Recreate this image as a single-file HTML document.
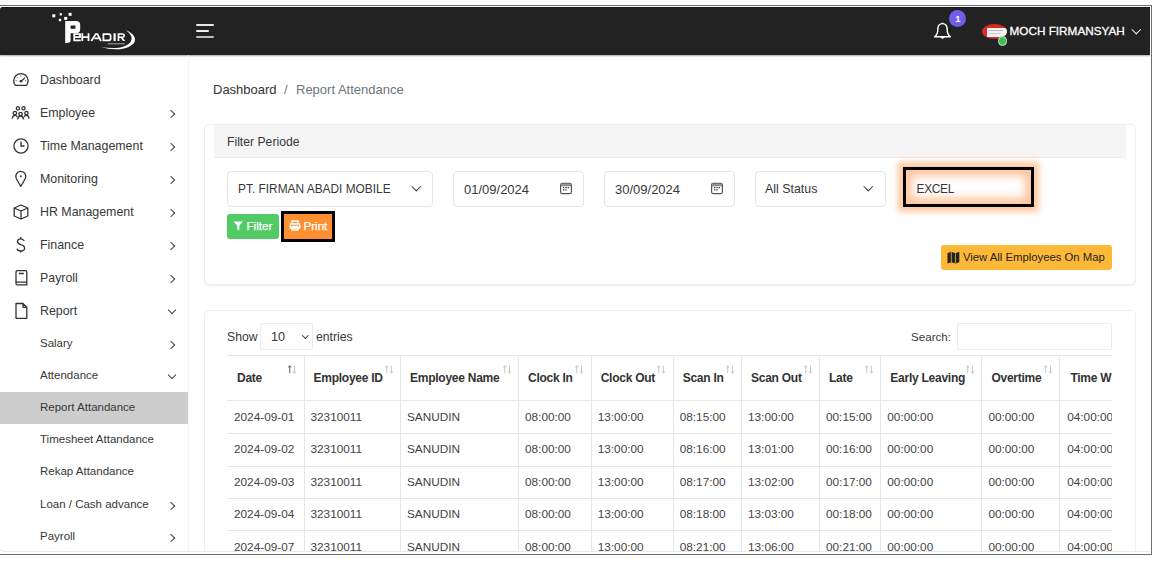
<!DOCTYPE html>
<html><head><meta charset="utf-8">
<style>
*{box-sizing:border-box;margin:0;padding:0}
html,body{width:1170px;height:565px;overflow:hidden;background:#fff;font-family:"Liberation Sans",sans-serif;color:#333}
.a{position:absolute}
.t{position:absolute;white-space:nowrap;line-height:1}
#frame{left:-1px;top:5px;width:1153px;height:550px;border:1px solid #6f6f6f}
#hdr{left:0;top:7px;width:1150px;height:48px;background:#222;border-top:1px solid #151515;border-top-left-radius:3px;box-shadow:0 1px 2px rgba(0,0,0,.35)}
#side{left:0;top:55px;width:189px;height:497px;border-right:1px solid #f4f4f4}
#bottomline{left:-2px;top:530px;width:1160px;height:22px;border-left:1.6px solid #e9e9e9;border-bottom:1.6px solid #e9e9e9;border-bottom-left-radius:7px}
.mi{font-size:12.4px;color:#383838}
.si{font-size:11.5px;color:#383838}
.chev{position:absolute;width:6px;height:6px;border-right:1.5px solid #444;border-top:1.5px solid #444;transform:rotate(45deg);margin-top:0.7px}
.chevd{position:absolute;width:6px;height:6px;border-right:1.4px solid #444;border-bottom:1.4px solid #444;transform:rotate(45deg)}
.card{border:1px solid #efefef;border-radius:5px;background:#fff;box-shadow:0 1px 1px rgba(0,0,0,.07)}
.inp{border:1px solid #e5e5e5;border-radius:4px;background:#fff}
.it{font-size:12.5px;color:#383838}
.vl{top:355px;width:1px;height:200px;background:#e6e6e6}
.hl{left:227px;width:885px;height:1px;background:#e6e6e6}
.th{font-size:12px;font-weight:bold;color:#333;top:371.9px;letter-spacing:-0.25px}
.td{font-size:11.8px;color:#444}
.sort{top:363px;font-size:11px;line-height:1;color:#c8c8c8;width:12px;height:12px}
.sort .up{position:absolute;left:0;top:0}
.sort .dn{position:absolute;left:5.5px;top:0}
.sort.act .up{color:#555}
svg.ic{position:absolute;fill:none;stroke:#333;stroke-width:1.3}
</style></head><body>
<div class="a" id="clip" style="left:0;top:0;width:1150px;height:552px;overflow:hidden">
<div id="hdr" class="a"></div>
<div id="side" class="a"></div>

<!-- logo -->
<svg class="a" style="left:0;top:0" width="200" height="56" viewBox="0 0 200 56">
 <g fill="#fff">
  <rect x="52.3" y="14.3" width="3" height="3"/>
  <rect x="59.7" y="13.2" width="2.2" height="2.2"/>
  <rect x="68.6" y="12.8" width="3" height="3"/>
  <rect x="58.8" y="18.8" width="2.4" height="2.4"/>
  <rect x="64.2" y="16.9" width="3" height="3"/>
  <path fill-rule="evenodd" d="M65.2 21 H76 Q80.2 21 80.2 25 V29.3 Q80.2 33.3 76 33.3 H70.6 V40.8 Q70.6 42 69.2 42.6 L65.2 43.2 Z M70.6 25.6 H75.4 V28.8 H70.6 Z"/>
  <path d="M117.6 33.3 H122.5 Q125 33.3 125 35.6 Q125 37.9 122.5 37.9 H123 L125.2 41.1 H123 L120.8 37.9 H119.3 V41.1 H117.6 Z M119.3 34.8 V36.5 H122.6 Q123.3 36.5 123.3 35.6 Q123.3 34.8 122.6 34.8 Z" fill-rule="evenodd"/>
 </g>
 <g fill="none" stroke="#fff" stroke-width="1.8">
  <path d="M80.8 34.1 H74.2 V40.3 H80.8 M74.2 37.2 H80 V34.1"/>
  <path d="M82.3 33.3 V41.1 M88.5 33.3 V41.1 M82.3 37.2 H88.5"/>
  <path d="M91.3 41.1 L95.8 34.1 H97.5 L100.9 41.1 M94.5 38.3 H98.5"/>
  <path d="M103.4 34.1 H108.8 Q110.6 34.1 110.6 36 V38.4 Q110.6 40.3 108.8 40.3 H103.4 Z"/>
  <path d="M114.6 33.3 V41.1" stroke-width="2.2"/>
 </g>
 <path d="M100.5 46.8 Q113 50.8 124 48.4 Q136 45.5 135 38.5 Q134 33.5 125.4 30 Q131.8 34 131.6 39 Q131 45 120.5 47.4 Q111 49 100.5 46.8 Z" fill="#fff"/>
 <rect x="107.8" y="43.1" width="17" height="1.3" fill="#8a8a8a"/>
</svg>
<!-- hamburger -->
<div class="a" style="left:196.2px;top:24.3px;width:17.8px;height:1.9px;border-radius:1px;background:#e8e8e8"></div>
<div class="a" style="left:196.2px;top:30.3px;width:12.8px;height:1.9px;border-radius:1px;background:#f0f0f0"></div>
<div class="a" style="left:196.2px;top:36.1px;width:17.8px;height:1.9px;border-radius:1px;background:#bdbdbd"></div>

<!-- header right -->
<svg class="a" style="left:930px;top:19.8px" width="26" height="26" viewBox="0 0 26 26">
 <path d="M12.5 3.6 C9.3 3.6 7.8 6 7.8 9.5 C7.8 12.8 7 15 4.6 16.8 H20.4 C18 15 17.2 12.8 17.2 9.5 C17.2 6 15.7 3.6 12.5 3.6 Z" fill="none" stroke="#fff" stroke-width="1.45" stroke-linejoin="round"/>
 <path d="M10.6 17.1 Q12.5 19.9 14.4 17.1 Z" fill="#fff" stroke="#fff" stroke-width="1"/>
 <circle cx="12.5" cy="3.3" r="0.9" fill="#fff"/>
</svg>
<div class="a" style="left:949.4px;top:10.2px;width:17px;height:17px;border-radius:50%;background:#6e5ee8"></div>
<div class="t" style="left:955.2px;top:13.8px;font-size:9.5px;font-weight:bold;color:#fff">1</div>
<div class="a" style="left:981.5px;top:23.5px;width:25px;height:15px;border-radius:50%;background:#d92b23;overflow:hidden">
  <div class="a" style="left:5px;top:4px;width:20px;height:9px;background:#f4f4f4"></div>
  <div class="a" style="left:7px;top:6px;width:14px;height:1px;background:#bbb"></div>
  <div class="a" style="left:7px;top:9px;width:12px;height:1px;background:#ccc"></div>
</div>
<div class="a" style="left:997.6px;top:36.2px;width:9.4px;height:9.4px;border-radius:50%;background:#3fbf4f;border:1.2px solid #d8d8d8"></div>
<div class="t" style="left:1009.5px;top:25.2px;font-size:11.75px;color:#fff;-webkit-text-stroke:0.3px #fff">MOCH FIRMANSYAH</div>
<div class="a" style="left:1132.8px;top:25.6px;width:6.5px;height:6.5px;border-right:1.3px solid #fff;border-bottom:1.3px solid #fff;transform:rotate(45deg)"></div>

<!-- sidebar -->
<svg class="ic" style="left:12px;top:71px" width="18" height="18" viewBox="0 0 18 18">
 <path d="M3.3 14.3 A7.2 7.2 0 1 1 14.5 14.3 Z" stroke-linejoin="round"/>
 <path d="M8.9 10.2 L12.6 7.3" stroke-width="1.4"/><circle cx="8.9" cy="10.2" r="1.3" fill="#333" stroke="none"/>
 <path d="M8.9 4.6 V5.7 M5 6.3 L5.7 7 M3.6 9.8 H4.7 M13.1 9.8 H14.2 M12.8 6.3 L12.1 7" stroke-width="0.9"/>
</svg>
<svg class="ic" style="left:11px;top:104px" width="20" height="18" viewBox="0 0 20 18">
 <circle cx="6.9" cy="4.3" r="1.6"/><circle cx="12.5" cy="4.3" r="1.6"/>
 <circle cx="3.9" cy="9.1" r="1.7"/><circle cx="9.6" cy="10" r="1.7"/><circle cx="15.4" cy="9.1" r="1.7"/>
 <path d="M1.2 14.6 Q1.6 11.3 3.9 11.3 Q5.6 11.3 6.3 13 M6.6 15.4 Q7 12.2 9.6 12.2 Q12.2 12.2 12.6 15.4 M13 13 Q13.7 11.3 15.4 11.3 Q17.7 11.3 18.1 14.6"/>
</svg>
<svg class="ic" style="left:12px;top:137px" width="18" height="18" viewBox="0 0 18 18">
 <circle cx="9" cy="9" r="7.1"/><path d="M9 4.5 V9 H12.5"/>
</svg>
<svg class="ic" style="left:12px;top:170px" width="18" height="18" viewBox="0 0 18 18">
 <path d="M8.8 16.5 L4.3 8.5 A5 5 0 1 1 13.3 8.5 Z" stroke-linejoin="round"/><circle cx="8.8" cy="6.3" r="1" fill="#333" stroke="none"/>
</svg>
<svg class="ic" style="left:12px;top:203px" width="18" height="18" viewBox="0 0 18 18">
 <path d="M9 2 L15.8 5 V13 L9 16 L2.2 13 V5 Z M2.2 5 L9 8 L15.8 5 M9 8 V16" stroke-linejoin="round"/>
</svg>
<svg class="ic" style="left:12px;top:236px" width="18" height="18" viewBox="0 0 18 18">
 <path d="M12.3 5 Q11 2.8 8.8 2.8 Q5.5 2.8 5.5 5.5 Q5.5 7.7 8.8 8.7 Q12.6 9.7 12.6 12.3 Q12.6 15 8.8 15 Q5.8 15 4.9 12.8 M8.8 1 V2.8 M8.8 15 V16.5"/>
</svg>
<svg class="ic" style="left:12px;top:269px" width="18" height="18" viewBox="0 0 18 18">
 <path d="M4 3 Q4 1.6 5.3 1.6 H13.6 Q14.8 1.6 14.8 3 V15.8 H5.3 Q4 15.8 4 14.5 Z M4 13.2 H14.8 M7 4.5 H11.8"/>
</svg>
<svg class="ic" style="left:12px;top:302px" width="18" height="18" viewBox="0 0 18 18">
 <path d="M4 1.5 H11 L14.8 5.3 V16.3 H4 Z M11 1.5 V5.3 H14.8" stroke-linejoin="round"/>
</svg>

<div class="t mi" style="left:40px;top:74px">Dashboard</div>
<div class="t mi" style="left:40px;top:107px">Employee</div>
<div class="t mi" style="left:40px;top:140px">Time Management</div>
<div class="t mi" style="left:40px;top:173px">Monitoring</div>
<div class="t mi" style="left:40px;top:206px">HR Management</div>
<div class="t mi" style="left:40px;top:239px">Finance</div>
<div class="t mi" style="left:40px;top:272px">Payroll</div>
<div class="t mi" style="left:40px;top:305px">Report</div>
<div class="t si" style="left:40px;top:338px">Salary</div>
<div class="t si" style="left:40px;top:370px">Attendance</div>
<div class="a" style="left:0;top:392px;width:188px;height:32px;background:#cdcdcd"></div>
<div class="t si" style="left:40px;top:402px">Report Attandance</div>
<div class="t si" style="left:40px;top:434px">Timesheet Attandance</div>
<div class="t si" style="left:40px;top:466px">Rekap Attandance</div>
<div class="t si" style="left:40px;top:499px">Loan / Cash advance</div>
<div class="t si" style="left:40px;top:531px">Payroll</div>
<div class="chev" style="left:168px;top:110px"></div>
<div class="chev" style="left:168px;top:143px"></div>
<div class="chev" style="left:168px;top:176px"></div>
<div class="chev" style="left:168px;top:209px"></div>
<div class="chev" style="left:168px;top:242px"></div>
<div class="chev" style="left:168px;top:275px"></div>
<div class="chevd" style="left:169px;top:306.8px"></div>
<div class="chev" style="left:168px;top:341px"></div>
<div class="chevd" style="left:169px;top:372.3px"></div>
<div class="chev" style="left:168px;top:502px"></div>
<div class="chev" style="left:168px;top:534px"></div>

<!-- breadcrumb -->
<div class="t" style="left:213px;top:83px;font-size:13px;color:#333">Dashboard</div>
<div class="t" style="left:284px;top:83px;font-size:13px;color:#777">/</div>
<div class="t" style="left:296px;top:83px;font-size:13px;color:#6c757d">Report Attendance</div>

<!-- card 1 -->
<div class="a card" style="left:204px;top:124px;width:932px;height:161px"></div>
<div class="a" style="left:214px;top:125px;width:912px;height:33px;background:#f5f5f5;border-bottom:1px solid #ececec"></div>
<div class="t it" style="left:227px;top:136px;font-size:12.2px">Filter Periode</div>

<div class="a inp" style="left:227px;top:171px;width:206px;height:36px"></div>
<div class="t it" style="left:238px;top:184.1px;font-size:11.9px">PT. FIRMAN ABADI MOBILE</div>
<div class="chevd" style="left:413px;top:183px;border-color:#333;width:6.5px;height:6.5px"></div>

<div class="a inp" style="left:453px;top:171px;width:131px;height:36px"></div>
<div class="t it" style="left:464px;top:182.5px;font-size:13px">01/09/2024</div>
<div class="a inp" style="left:604px;top:171px;width:131px;height:36px"></div>
<div class="t it" style="left:615px;top:182.5px;font-size:13px">30/09/2024</div>
<svg class="a" style="left:559px;top:181px" width="14" height="14" viewBox="0 0 14 14"><rect x="1.6" y="2.3" width="10.8" height="10.4" rx="1.8" fill="none" stroke="#555" stroke-width="1.2"/><rect x="2" y="4.3" width="10" height="0.9" fill="#555"/><rect x="2" y="2.6" width="10" height="1.7" fill="#999"/><g fill="#444"><rect x="4" y="6" width="1.4" height="1.3"/><rect x="6.3" y="6" width="1.4" height="1.3"/><rect x="8.6" y="6" width="1.4" height="1.3"/><rect x="4" y="8.3" width="1.4" height="1.3"/><rect x="6.3" y="8.3" width="1.4" height="1.3"/></g></svg>
<svg class="a" style="left:710px;top:181px" width="14" height="14" viewBox="0 0 14 14"><rect x="1.6" y="2.3" width="10.8" height="10.4" rx="1.8" fill="none" stroke="#555" stroke-width="1.2"/><rect x="2" y="4.3" width="10" height="0.9" fill="#555"/><rect x="2" y="2.6" width="10" height="1.7" fill="#999"/><g fill="#444"><rect x="4" y="6" width="1.4" height="1.3"/><rect x="6.3" y="6" width="1.4" height="1.3"/><rect x="8.6" y="6" width="1.4" height="1.3"/><rect x="4" y="8.3" width="1.4" height="1.3"/><rect x="6.3" y="8.3" width="1.4" height="1.3"/></g></svg>

<div class="a inp" style="left:755px;top:171px;width:131px;height:36px"></div>
<div class="t it" style="left:765px;top:183.3px;font-size:12.4px">All Status</div>
<div class="chevd" style="left:865px;top:183px;border-color:#333;width:6.5px;height:6.5px"></div>

<div class="a" style="left:903px;top:167px;width:131px;height:40px;border:3px solid #000;box-shadow:0 0 6px 5px rgba(255,168,105,.62), inset 0 0 8px 6px rgba(255,175,120,.72);background:#fff"></div>
<div class="t it" style="left:916.5px;top:184px;font-size:11.9px;letter-spacing:-0.3px">EXCEL</div>

<div class="a" style="left:227px;top:214px;width:52px;height:25px;border-radius:3px;background:#52cb66"></div>
<svg class="a" style="left:233px;top:220.5px" width="11" height="10" viewBox="0 0 11 10"><path d="M0.5 0.5 H10 L6.3 4.8 V9.5 L4.3 8.3 V4.8 Z" fill="#fff"/></svg>
<div class="t" style="left:246.5px;top:219.6px;font-size:11.6px;color:#fff;-webkit-text-stroke:0.25px #fff">Filter</div>
<div class="a" style="left:281px;top:211px;width:54px;height:31px;border:3px solid #000;background:#fd8f30"></div>
<svg class="a" style="left:288.5px;top:220px" width="12" height="11" viewBox="0 0 12 11"><path d="M3 3.5 V1 H9 V3.5 M1.3 4 H10.7 V8 H1.3 Z M3 6.5 H9 V10 H3 Z" fill="none" stroke="#fff" stroke-width="1.4" stroke-linejoin="round"/></svg>
<div class="t" style="left:303.5px;top:219.6px;font-size:11.6px;color:#fff;-webkit-text-stroke:0.25px #fff">Print</div>

<div class="a" style="left:941px;top:245px;width:171px;height:25px;border-radius:3px;background:#feb838"></div>
<svg class="a" style="left:947px;top:251px" width="13" height="13" viewBox="0 0 13 13"><path d="M0.5 2.2 L4 0.8 L8.5 2.2 L12.3 0.8 V11.2 L8.5 12.6 L4 11.2 L0.5 12.6 Z" fill="#222"/><path d="M4.3 1 V11 M8.4 2.3 V12.3" stroke="#feb838" stroke-width="0.8"/></svg>
<div class="t" style="left:963px;top:252px;font-size:11.3px;color:#222">View All Employees On Map</div>

<!-- card 2 -->
<div class="a card" style="left:204px;top:310px;width:932px;height:260px"></div>
<div class="t it" style="left:227px;top:331px;font-size:12.2px">Show</div>
<div class="a inp" style="left:260px;top:323px;width:53px;height:27px;border-radius:2px;border-color:#ececec"></div>
<div class="t it" style="left:271px;top:331px;font-size:12.6px">10</div>
<div class="chevd" style="left:303.3px;top:332.8px;border-color:#333;width:4.6px;height:4.6px;border-width:1.5px"></div>
<div class="t it" style="left:316px;top:331px;font-size:12.2px">entries</div>
<div class="t it" style="left:911px;top:331px;font-size:11.6px">Search:</div>
<div class="a inp" style="left:957px;top:323px;width:155px;height:27px;border-radius:2px;border-color:#ececec"></div>

<div class="a" style="left:0;top:0;width:1112px;height:552px;overflow:hidden">
<div class="a hl" style="top:355px"></div>
<div class="a hl" style="top:400px"></div>
<div class="a hl" style="top:433px"></div>
<div class="a hl" style="top:466px"></div>
<div class="a hl" style="top:498px"></div>
<div class="a hl" style="top:530px"></div>
<div class="a vl" style="left:304px"></div>
<div class="a vl" style="left:400px"></div>
<div class="a vl" style="left:518px"></div>
<div class="a vl" style="left:591px"></div>
<div class="a vl" style="left:673px"></div>
<div class="a vl" style="left:741px"></div>
<div class="a vl" style="left:819px"></div>
<div class="a vl" style="left:880px"></div>
<div class="a vl" style="left:981px"></div>
<div class="a vl" style="left:1059px"></div>
<div class="t th" style="left:237.0px">Date</div>
<svg class="a" style="left:288.0px;top:365px" width="9" height="9" viewBox="0 0 9 9"><path d="M1.7 8.3 V0.8 M0.2 2.6 L1.7 0.6 L3.2 2.6" fill="none" stroke="#666" stroke-width="1"/><path d="M6.5 0.7 V8.2 M5 6.4 L6.5 8.4 L8 6.4" fill="none" stroke="#c9c9c9" stroke-width="1"/></svg>
<div class="t th" style="left:313.5px">Employee ID</div>
<svg class="a" style="left:384.5px;top:365px" width="9" height="9" viewBox="0 0 9 9"><path d="M1.7 8.3 V0.8 M0.2 2.6 L1.7 0.6 L3.2 2.6" fill="none" stroke="#c9c9c9" stroke-width="1"/><path d="M6.5 0.7 V8.2 M5 6.4 L6.5 8.4 L8 6.4" fill="none" stroke="#c9c9c9" stroke-width="1"/></svg>
<div class="t th" style="left:410.0px">Employee Name</div>
<svg class="a" style="left:502.5px;top:365px" width="9" height="9" viewBox="0 0 9 9"><path d="M1.7 8.3 V0.8 M0.2 2.6 L1.7 0.6 L3.2 2.6" fill="none" stroke="#c9c9c9" stroke-width="1"/><path d="M6.5 0.7 V8.2 M5 6.4 L6.5 8.4 L8 6.4" fill="none" stroke="#c9c9c9" stroke-width="1"/></svg>
<div class="t th" style="left:528.0px">Clock In</div>
<svg class="a" style="left:575.2px;top:365px" width="9" height="9" viewBox="0 0 9 9"><path d="M1.7 8.3 V0.8 M0.2 2.6 L1.7 0.6 L3.2 2.6" fill="none" stroke="#c9c9c9" stroke-width="1"/><path d="M6.5 0.7 V8.2 M5 6.4 L6.5 8.4 L8 6.4" fill="none" stroke="#c9c9c9" stroke-width="1"/></svg>
<div class="t th" style="left:600.7px">Clock Out</div>
<svg class="a" style="left:657.2px;top:365px" width="9" height="9" viewBox="0 0 9 9"><path d="M1.7 8.3 V0.8 M0.2 2.6 L1.7 0.6 L3.2 2.6" fill="none" stroke="#c9c9c9" stroke-width="1"/><path d="M6.5 0.7 V8.2 M5 6.4 L6.5 8.4 L8 6.4" fill="none" stroke="#c9c9c9" stroke-width="1"/></svg>
<div class="t th" style="left:682.7px">Scan In</div>
<svg class="a" style="left:725.5px;top:365px" width="9" height="9" viewBox="0 0 9 9"><path d="M1.7 8.3 V0.8 M0.2 2.6 L1.7 0.6 L3.2 2.6" fill="none" stroke="#c9c9c9" stroke-width="1"/><path d="M6.5 0.7 V8.2 M5 6.4 L6.5 8.4 L8 6.4" fill="none" stroke="#c9c9c9" stroke-width="1"/></svg>
<div class="t th" style="left:751.0px">Scan Out</div>
<svg class="a" style="left:803.5px;top:365px" width="9" height="9" viewBox="0 0 9 9"><path d="M1.7 8.3 V0.8 M0.2 2.6 L1.7 0.6 L3.2 2.6" fill="none" stroke="#c9c9c9" stroke-width="1"/><path d="M6.5 0.7 V8.2 M5 6.4 L6.5 8.4 L8 6.4" fill="none" stroke="#c9c9c9" stroke-width="1"/></svg>
<div class="t th" style="left:829.0px">Late</div>
<svg class="a" style="left:864.8px;top:365px" width="9" height="9" viewBox="0 0 9 9"><path d="M1.7 8.3 V0.8 M0.2 2.6 L1.7 0.6 L3.2 2.6" fill="none" stroke="#c9c9c9" stroke-width="1"/><path d="M6.5 0.7 V8.2 M5 6.4 L6.5 8.4 L8 6.4" fill="none" stroke="#c9c9c9" stroke-width="1"/></svg>
<div class="t th" style="left:890.3px">Early Leaving</div>
<svg class="a" style="left:965.9px;top:365px" width="9" height="9" viewBox="0 0 9 9"><path d="M1.7 8.3 V0.8 M0.2 2.6 L1.7 0.6 L3.2 2.6" fill="none" stroke="#c9c9c9" stroke-width="1"/><path d="M6.5 0.7 V8.2 M5 6.4 L6.5 8.4 L8 6.4" fill="none" stroke="#c9c9c9" stroke-width="1"/></svg>
<div class="t th" style="left:991.4px">Overtime</div>
<svg class="a" style="left:1043.7px;top:365px" width="9" height="9" viewBox="0 0 9 9"><path d="M1.7 8.3 V0.8 M0.2 2.6 L1.7 0.6 L3.2 2.6" fill="none" stroke="#c9c9c9" stroke-width="1"/><path d="M6.5 0.7 V8.2 M5 6.4 L6.5 8.4 L8 6.4" fill="none" stroke="#c9c9c9" stroke-width="1"/></svg>
<div class="t th" style="left:1070.4px">Time W</div>
<div class="t td" style="left:234.0px;top:411.8px">2024-09-01</div>
<div class="t td" style="left:310.5px;top:411.8px">32310011</div>
<div class="t td" style="left:407.0px;top:411.8px">SANUDIN</div>
<div class="t td" style="left:525.0px;top:411.8px">08:00:00</div>
<div class="t td" style="left:597.7px;top:411.8px">13:00:00</div>
<div class="t td" style="left:679.7px;top:411.8px">08:15:00</div>
<div class="t td" style="left:748.0px;top:411.8px">13:00:00</div>
<div class="t td" style="left:826.0px;top:411.8px">00:15:00</div>
<div class="t td" style="left:887.3px;top:411.8px">00:00:00</div>
<div class="t td" style="left:988.4px;top:411.8px">00:00:00</div>
<div class="t td" style="left:1067.2px;top:411.8px">04:00:00</div>
<div class="t td" style="left:234.0px;top:444.3px">2024-09-02</div>
<div class="t td" style="left:310.5px;top:444.3px">32310011</div>
<div class="t td" style="left:407.0px;top:444.3px">SANUDIN</div>
<div class="t td" style="left:525.0px;top:444.3px">08:00:00</div>
<div class="t td" style="left:597.7px;top:444.3px">13:00:00</div>
<div class="t td" style="left:679.7px;top:444.3px">08:16:00</div>
<div class="t td" style="left:748.0px;top:444.3px">13:01:00</div>
<div class="t td" style="left:826.0px;top:444.3px">00:16:00</div>
<div class="t td" style="left:887.3px;top:444.3px">00:00:00</div>
<div class="t td" style="left:988.4px;top:444.3px">00:00:00</div>
<div class="t td" style="left:1067.2px;top:444.3px">04:00:00</div>
<div class="t td" style="left:234.0px;top:476.8px">2024-09-03</div>
<div class="t td" style="left:310.5px;top:476.8px">32310011</div>
<div class="t td" style="left:407.0px;top:476.8px">SANUDIN</div>
<div class="t td" style="left:525.0px;top:476.8px">08:00:00</div>
<div class="t td" style="left:597.7px;top:476.8px">13:00:00</div>
<div class="t td" style="left:679.7px;top:476.8px">08:17:00</div>
<div class="t td" style="left:748.0px;top:476.8px">13:02:00</div>
<div class="t td" style="left:826.0px;top:476.8px">00:17:00</div>
<div class="t td" style="left:887.3px;top:476.8px">00:00:00</div>
<div class="t td" style="left:988.4px;top:476.8px">00:00:00</div>
<div class="t td" style="left:1067.2px;top:476.8px">04:00:00</div>
<div class="t td" style="left:234.0px;top:509.3px">2024-09-04</div>
<div class="t td" style="left:310.5px;top:509.3px">32310011</div>
<div class="t td" style="left:407.0px;top:509.3px">SANUDIN</div>
<div class="t td" style="left:525.0px;top:509.3px">08:00:00</div>
<div class="t td" style="left:597.7px;top:509.3px">13:00:00</div>
<div class="t td" style="left:679.7px;top:509.3px">08:18:00</div>
<div class="t td" style="left:748.0px;top:509.3px">13:03:00</div>
<div class="t td" style="left:826.0px;top:509.3px">00:18:00</div>
<div class="t td" style="left:887.3px;top:509.3px">00:00:00</div>
<div class="t td" style="left:988.4px;top:509.3px">00:00:00</div>
<div class="t td" style="left:1067.2px;top:509.3px">04:00:00</div>
<div class="t td" style="left:234.0px;top:541.8px">2024-09-07</div>
<div class="t td" style="left:310.5px;top:541.8px">32310011</div>
<div class="t td" style="left:407.0px;top:541.8px">SANUDIN</div>
<div class="t td" style="left:525.0px;top:541.8px">08:00:00</div>
<div class="t td" style="left:597.7px;top:541.8px">13:00:00</div>
<div class="t td" style="left:679.7px;top:541.8px">08:21:00</div>
<div class="t td" style="left:748.0px;top:541.8px">13:06:00</div>
<div class="t td" style="left:826.0px;top:541.8px">00:21:00</div>
<div class="t td" style="left:887.3px;top:541.8px">00:00:00</div>
<div class="t td" style="left:988.4px;top:541.8px">00:00:00</div>
<div class="t td" style="left:1067.2px;top:541.8px">04:00:00</div>
</div>
<div id="bottomline" class="a"></div>
</div>
<div id="frame" class="a"></div>
</body></html>
